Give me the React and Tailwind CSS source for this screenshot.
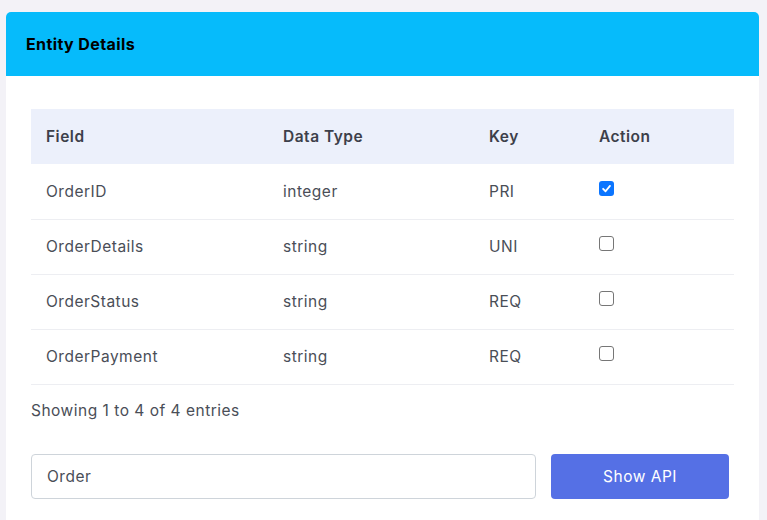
import React from "react";

const rows = [
  { field: "OrderID", type: "integer", key: "PRI", checked: true },
  { field: "OrderDetails", type: "string", key: "UNI", checked: false },
  { field: "OrderStatus", type: "string", key: "REQ", checked: false },
  { field: "OrderPayment", type: "string", key: "REQ", checked: false },
];

function Check({ checked }) {
  if (checked) {
    return (
      <span className="flex h-[15px] w-[15px] items-center justify-center rounded-[3px] bg-[#0b75ff]">
        <svg width="11" height="11" viewBox="0 0 12 12">
          <path d="M2.3 6.3 L5 9 L9.8 3.2" fill="none" stroke="white" strokeWidth="2" strokeLinecap="round" strokeLinejoin="round" />
        </svg>
      </span>
    );
  }
  return <span className="block h-[15px] w-[15px] rounded-[3px] border border-[#767676] bg-white" />;
}

export default function App() {
  return (
    <div
      className="min-h-[520px] bg-[#f3f2f7] pt-3 pl-[6px] pr-2 text-[15.5px] tracking-[0.5px]"
      style={{ fontFamily: "Inter, 'Open Sans', sans-serif" }}
    >
      <div className="h-[508px] overflow-hidden rounded-t-[5px] bg-white">
        <div className="flex h-16 items-center bg-[#06bbfb] px-5">
          <h2 className="text-[16px] font-bold tracking-[0.4px] text-black">Entity Details</h2>
        </div>
        <div className="px-[25px] pt-[33px]">
          <table className="w-[703px] table-fixed border-collapse">
            <colgroup>
              <col className="w-[237px]" />
              <col className="w-[206px]" />
              <col className="w-[110px]" />
              <col className="w-[150px]" />
            </colgroup>
            <thead>
              <tr className="h-[55px] bg-[#ecf0fb] text-left">
                <th className="px-[15px] font-semibold text-[#3d3f4a]">Field</th>
                <th className="px-[15px] font-semibold text-[#3d3f4a]">Data Type</th>
                <th className="px-[15px] font-semibold text-[#3d3f4a]">Key</th>
                <th className="px-[15px] font-semibold text-[#3d3f4a]">Action</th>
              </tr>
            </thead>
            <tbody>
              {rows.map((r) => (
                <tr key={r.field} className="h-[55px] border-b border-[#edeef2] text-[#4a4e57]">
                  <td className="px-[15px]">{r.field}</td>
                  <td className="px-[15px]">{r.type}</td>
                  <td className="px-[15px]">{r.key}</td>
                  <td className="px-[15px]">
                    <div className="-mt-[6px]">
                      <Check checked={r.checked} />
                    </div>
                  </td>
                </tr>
              ))}
            </tbody>
          </table>
          <p className="mt-[14px] text-[#4a4e57]">Showing 1 to 4 of 4 entries</p>
          <div className="mt-[32px] flex gap-[15px]">
            <div className="flex h-[45px] w-[505px] items-center rounded-[4px] border border-[#ced4da] px-[15px] text-[#4a4e57]">
              Order
            </div>
            <button className="h-[45px] w-[178px] rounded-[4px] bg-[#5570e5] tracking-[0.5px] text-white">Show API</button>
          </div>
        </div>
      </div>
    </div>
  );
}
